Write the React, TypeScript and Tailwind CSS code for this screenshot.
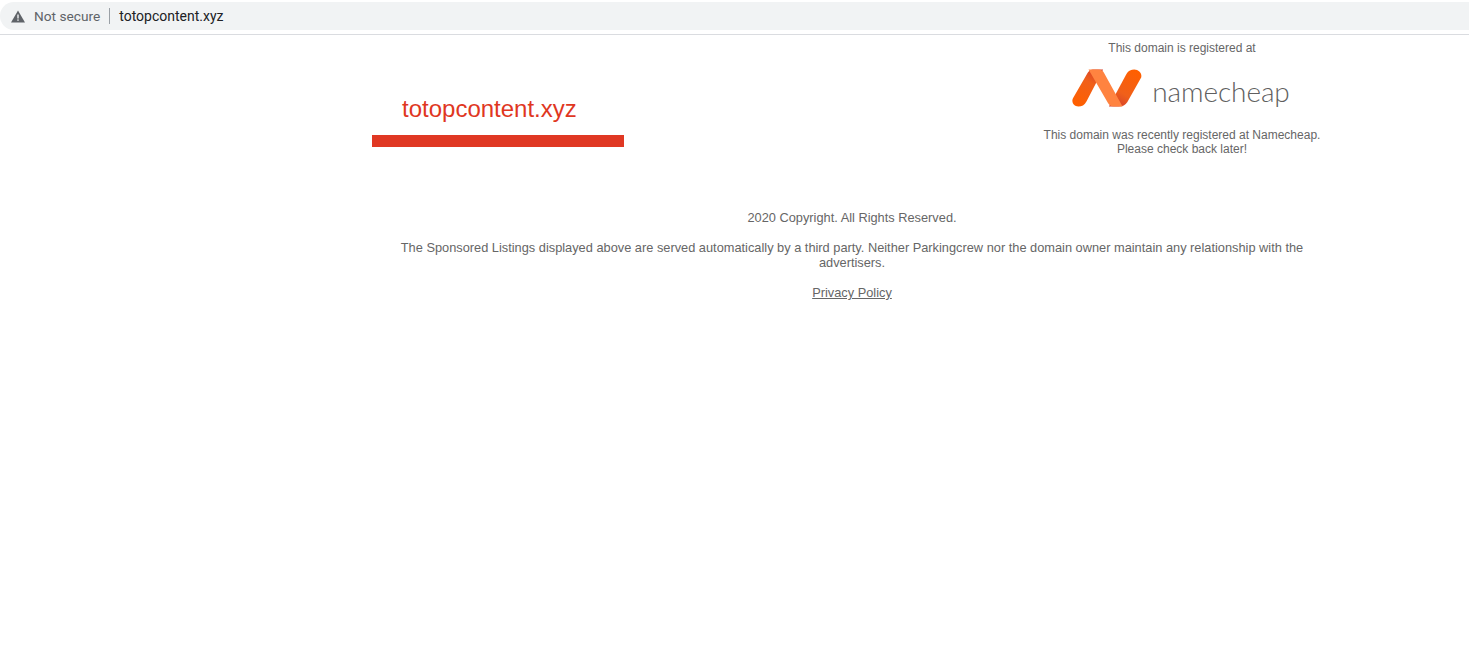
export default function App() {
  return (
    <div className="min-h-[665px] bg-white font-['Liberation_Sans',Arial,sans-serif] text-[#666]">
      <div className="h-[35px] border-b border-[#dadce0] pt-[2px]">
        <div className="flex h-[28px] items-center rounded-l-[14px] bg-[#f1f3f4] pl-[11px] font-['Roboto',sans-serif] text-[14px]">
          <svg width="14" height="13" viewBox="0 0 14 13" className="shrink-0">
            <path d="M7 0.5 L14 12.5 H0 Z" fill="#5f6368" />
            <rect x="6.3" y="4.5" width="1.4" height="4" fill="#f1f3f4" />
            <rect x="6.3" y="9.4" width="1.4" height="1.4" fill="#f1f3f4" />
          </svg>
          <span className="ml-[9px] text-[13.7px] text-[#5f6368]">Not secure</span>
          <span className="ml-[9px] h-[16px] w-px bg-[#9aa0a6]" />
          <span className="ml-[9px] text-[#202124]">totopcontent.xyz</span>
        </div>
      </div>
      <div className="ml-[372px] w-[960px]">
        <div className="flex justify-between">
          <div className="w-[252px]">
            <div className="mt-[60px] pl-[30px] text-[24px] leading-[28px] text-[#e0371f]">totopcontent.xyz</div>
            <div className="mt-[12px] h-[12px] bg-[#e03823]" />
          </div>
          <div className="w-[300px] pt-[6px] text-center text-[12px] leading-[14px]">
            <div>This domain is registered at</div>
            <div className="mt-[8px] flex h-[56px] items-start justify-center pl-[1px] pr-[3px] pt-[6px]">
              <svg width="70" height="38" viewBox="0 0 72 39" className="shrink-0">
                <defs>
                  <linearGradient id="a" x1="0.75" y1="0" x2="0.25" y2="1">
                    <stop offset="0" stopColor="#d4402b" />
                    <stop offset="0.35" stopColor="#f0601a" />
                    <stop offset="1" stopColor="#ff5f00" />
                  </linearGradient>
                  <linearGradient id="b" x1="0.25" y1="1" x2="0.75" y2="0">
                    <stop offset="0" stopColor="#d4402b" />
                    <stop offset="0.35" stopColor="#f0601a" />
                    <stop offset="1" stopColor="#ff5f00" />
                  </linearGradient>
                </defs>
                <path d="M16 4 C18 1 20 0.500 24 0.500 L32 0.500 L15 33 C13 37 10 38.500 6.500 38.500 C2 38.500 -1 34 1 30 Z" fill="url(#a)" />
                <path d="M71 9 L57 34 C55 37.500 52 38.500 48 38.500 L38 38.500 L56 5 C58 1.500 61 0.500 64 0.500 C69 0.500 72.500 5 71 9 Z" fill="url(#b)" />
                <path d="M17 0.500 H27 C30 0.500 32 2 33 4 L52 38.500 H43 C40 38.500 38 37 37 35 Z" fill="#ff8340" />
              </svg>
              <span className="ml-[10px] mt-[2px] font-['Lato',sans-serif] text-[28px] font-light leading-[40px] tracking-[-0.1px] text-[#5f5f5f]">namecheap</span>
            </div>
            <div className="mt-[9px]">This domain was recently registered at Namecheap.</div>
            <div>Please check back later!</div>
          </div>
        </div>
        <div className="mt-[54px] text-center text-[12.8px] leading-[15px]">
          <p>2020 Copyright. All Rights Reserved.</p>
          <p className="mt-[15px]">The Sponsored Listings displayed above are served automatically by a third party. Neither Parkingcrew nor the domain owner maintain any relationship with the advertisers.</p>
          <p className="mt-[15px] underline">Privacy Policy</p>
        </div>
      </div>
    </div>
  );
}
